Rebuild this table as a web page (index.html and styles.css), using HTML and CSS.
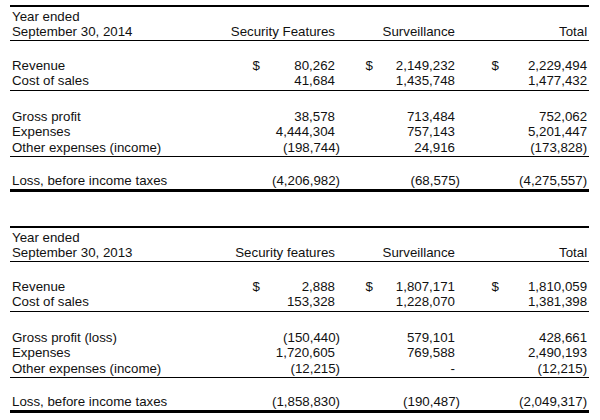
FILE: index.html
```html
<!DOCTYPE html>
<html>
<head>
<meta charset="utf-8">
<link rel="stylesheet" href="styles.css">
</head>
<body>
<div class="sheet">
  <table class="fin">
    <colgroup>
      <col class="c-label"><col class="c-d1"><col class="c-n1"><col class="c-d2"><col class="c-n2"><col class="c-d3"><col class="c-n3">
    </colgroup>
    <tr class="h1"><td class="lab" colspan="7">Year ended</td></tr>
    <tr class="h2">
      <td class="lab">September 30, 2014</td>
      <td class="hd" colspan="2">Security Features</td>
      <td class="hd" colspan="2">Surveillance</td>
      <td class="hd tot" colspan="2">Total</td>
    </tr>
    <tr class="first">
      <td class="lab">Revenue</td><td class="d">$</td><td class="n">80,262</td><td class="d">$</td><td class="n">2,149,232</td><td class="d">$</td><td class="n tot">2,229,494</td>
    </tr>
    <tr class="last">
      <td class="lab">Cost of sales</td><td class="d"></td><td class="n">41,684</td><td class="d"></td><td class="n">1,435,748</td><td class="d"></td><td class="n tot">1,477,432</td>
    </tr>
    <tr class="first2">
      <td class="lab">Gross profit</td><td class="d"></td><td class="n">38,578</td><td class="d"></td><td class="n">713,484</td><td class="d"></td><td class="n tot">752,062</td>
    </tr>
    <tr>
      <td class="lab">Expenses</td><td class="d"></td><td class="n">4,444,304</td><td class="d"></td><td class="n">757,143</td><td class="d"></td><td class="n tot">5,201,447</td>
    </tr>
    <tr class="last">
      <td class="lab">Other expenses (income)</td><td class="d"></td><td class="n p">(198,744)</td><td class="d"></td><td class="n">24,916</td><td class="d"></td><td class="n tot">(173,828)</td>
    </tr>
    <tr class="final">
      <td class="lab">Loss, before income taxes</td><td class="d"></td><td class="n p">(4,206,982)</td><td class="d"></td><td class="n p">(68,575)</td><td class="d"></td><td class="n tot">(4,275,557)</td>
    </tr>
  </table>

  <table class="fin second">
    <colgroup>
      <col class="c-label"><col class="c-d1"><col class="c-n1"><col class="c-d2"><col class="c-n2"><col class="c-d3"><col class="c-n3">
    </colgroup>
    <tr class="h1"><td class="lab" colspan="7">Year ended</td></tr>
    <tr class="h2">
      <td class="lab">September 30, 2013</td>
      <td class="hd" colspan="2">Security features</td>
      <td class="hd" colspan="2">Surveillance</td>
      <td class="hd tot" colspan="2">Total</td>
    </tr>
    <tr class="first">
      <td class="lab">Revenue</td><td class="d">$</td><td class="n">2,888</td><td class="d">$</td><td class="n">1,807,171</td><td class="d">$</td><td class="n tot">1,810,059</td>
    </tr>
    <tr class="last">
      <td class="lab">Cost of sales</td><td class="d"></td><td class="n">153,328</td><td class="d"></td><td class="n">1,228,070</td><td class="d"></td><td class="n tot">1,381,398</td>
    </tr>
    <tr class="first2">
      <td class="lab">Gross profit (loss)</td><td class="d"></td><td class="n p">(150,440)</td><td class="d"></td><td class="n">579,101</td><td class="d"></td><td class="n tot">428,661</td>
    </tr>
    <tr>
      <td class="lab">Expenses</td><td class="d"></td><td class="n">1,720,605</td><td class="d"></td><td class="n">769,588</td><td class="d"></td><td class="n tot">2,490,193</td>
    </tr>
    <tr class="last">
      <td class="lab">Other expenses (income)</td><td class="d"></td><td class="n p">(12,215)</td><td class="d"></td><td class="n">-</td><td class="d"></td><td class="n tot">(12,215)</td>
    </tr>
    <tr class="final">
      <td class="lab">Loss, before income taxes</td><td class="d"></td><td class="n p">(1,858,830)</td><td class="d"></td><td class="n p">(190,487)</td><td class="d"></td><td class="n tot">(2,049,317)</td>
    </tr>
  </table>
</div>
</body>
</html>
```
FILE: styles.css
```css
html, body {
  margin: 0;
  padding: 0;
  background: #ffffff;
}
.sheet {
  padding: 5px 0 0 10px;
  font-family: "Liberation Sans", Arial, sans-serif;
  font-size: 13.3px;
  color: #111111;
}
.fin {
  width: 579px;
  table-layout: fixed;
  border-collapse: separate;
  border-spacing: 0;
  border-top: 2px solid #000;
}
.second {
  margin-top: 34px;
}
.c-label { width: 215px; }
.c-d1 { width: 37px; }
.c-n1 { width: 78px; }
.c-d2 { width: 35px; }
.c-n2 { width: 85px; }
.c-d3 { width: 41px; }
.c-n3 { width: 88px; }

.fin td {
  padding: 0;
  line-height: 15.5px;
  white-space: nowrap;
  vertical-align: top;
}
.fin td.lab {
  padding-left: 2px;
  text-align: left;
}
.fin td.d {
  text-align: right;
  padding-right: 2px;
}
.fin td.n, .fin td.hd {
  text-align: right;
  padding-right: 5px;
}
.fin td.n.p {
  padding-right: 0;
}
.fin td.tot {
  padding-right: 2px;
}
.fin tr.h1 td {
  line-height: 15px;
  padding-top: 1.5px;
}
.fin tr.h2 td {
  line-height: 15px;
  padding-bottom: 1.5px;
  border-bottom: 1px solid #000;
}
.fin tr.first td {
  padding-top: 16.5px;
}
.fin tr.first2 td {
  padding-top: 18px;
}
.fin tr.last td {
  padding-bottom: 1px;
  border-bottom: 1px solid #000;
}
.fin tr.final td {
  padding-top: 16px;
  padding-bottom: 0.5px;
  border-bottom: 3px solid #000;
}
```
